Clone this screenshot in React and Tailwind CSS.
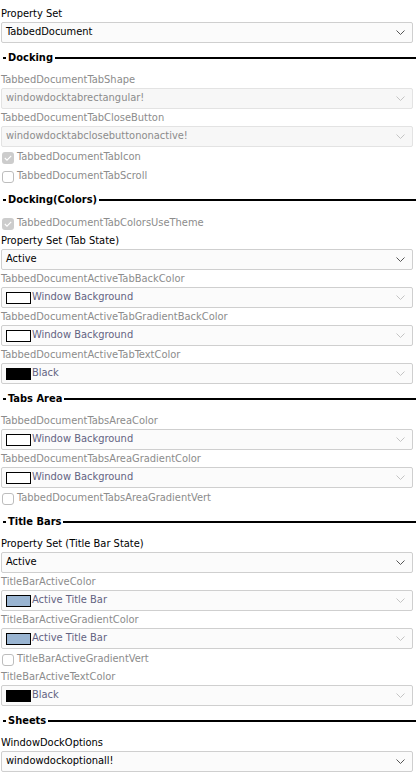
import React from "react";

const Chevron = ({ faded }) => (
  <svg width="9" height="5" viewBox="0 0 9 5" className="shrink-0 mr-[1px]">
    <path d="M0.5 0.5 L4.5 4.5 L8.5 0.5" fill="none" stroke={faded ? "#c4c4c4" : "#555"} strokeWidth="1" />
  </svg>
);

const Section = ({ title }) => (
  <div className="flex items-center h-[28px] pl-[3px]">
    <div className="w-[3px] h-[2px] bg-black" />
    <span className="font-bold text-black px-[2px] text-[11px]">{title}</span>
    <div className="flex-1 h-[2px] bg-black" />
  </div>
);

const Label = ({ text, dim }) => (
  <div className={`h-[16px] leading-[16px] pl-[1px] whitespace-nowrap ${dim ? "text-[#8c8c8c]" : "text-black"}`}>{text}</div>
);

const Select = ({ value, dim, swatch, faded }) => (
  <div
    className={`ml-[1px] mr-[3px] mb-[1px] h-[21px] flex items-center pl-[4px] pr-[6px] border rounded-[2px] ${
      dim ? "bg-[#f7f7f7] border-[#e3e3e3]" : "bg-[#fbfbfb] border-[#cfcfcf]"
    }`}
  >
    {swatch && <div className="w-[25px] h-[12px] border border-black mr-[1px] shrink-0" style={{ background: swatch }} />}
    <span className={`flex-1 ${swatch ? "text-[#636382]" : dim ? "text-[#8c8c8c]" : "text-black"}`}>{value}</span>
    <Chevron faded={faded} />
  </div>
);

const Check = ({ text, checked }) => (
  <div className="flex items-center h-[19px] pl-[2px] gap-[3px]">
    {checked ? (
      <div className="w-[12px] h-[12px] rounded-[3px] bg-[#cccccc] flex items-center justify-center">
        <svg width="8" height="6" viewBox="0 0 8 6">
          <path d="M0.8 3 L3 5.2 L7.2 0.8" fill="none" stroke="#fff" strokeWidth="1.1" />
        </svg>
      </div>
    ) : (
      <div className="w-[12px] h-[12px] rounded-[3px] border border-[#bdbdbd] bg-white" />
    )}
    <span className="text-[#8c8c8c]">{text}</span>
  </div>
);

export default function App() {
  return (
    <div className="w-[416px] h-[778px] bg-white overflow-hidden text-[11px] pt-[6px]" style={{ fontFamily: "'DejaVu Sans Condensed', 'DejaVu Sans', sans-serif" }}>
      <Label text="Property Set" />
      <Select value="TabbedDocument" />
      <Section title="Docking" />
      <Label text="TabbedDocumentTabShape" dim />
      <Select value="windowdocktabrectangular!" dim faded />
      <Label text="TabbedDocumentTabCloseButton" dim />
      <Select value="windowdocktabclosebuttononactive!" dim faded />
      <Check text="TabbedDocumentTabIcon" checked />
      <Check text="TabbedDocumentTabScroll" />
      <Section title="Docking(Colors)" />
      <Check text="TabbedDocumentTabColorsUseTheme" checked />
      <Label text="Property Set (Tab State)" />
      <Select value="Active" />
      <Label text="TabbedDocumentActiveTabBackColor" dim />
      <Select value="Window Background" swatch="#fff" faded />
      <Label text="TabbedDocumentActiveTabGradientBackColor" dim />
      <Select value="Window Background" swatch="#fff" faded />
      <Label text="TabbedDocumentActiveTabTextColor" dim />
      <Select value="Black" swatch="#000" faded />
      <Section title="Tabs Area" />
      <Label text="TabbedDocumentTabsAreaColor" dim />
      <Select value="Window Background" swatch="#fff" faded />
      <Label text="TabbedDocumentTabsAreaGradientColor" dim />
      <Select value="Window Background" swatch="#fff" faded />
      <Check text="TabbedDocumentTabsAreaGradientVert" />
      <Section title="Title Bars" />
      <Label text="Property Set (Title Bar State)" />
      <Select value="Active" />
      <Label text="TitleBarActiveColor" dim />
      <Select value="Active Title Bar" swatch="#99b4d1" faded />
      <Label text="TitleBarActiveGradientColor" dim />
      <Select value="Active Title Bar" swatch="#99b4d1" faded />
      <Check text="TitleBarActiveGradientVert" />
      <Label text="TitleBarActiveTextColor" dim />
      <Select value="Black" swatch="#000" faded />
      <Section title="Sheets" />
      <Label text="WindowDockOptions" />
      <Select value="windowdockoptionall!" />
    </div>
  );
}
